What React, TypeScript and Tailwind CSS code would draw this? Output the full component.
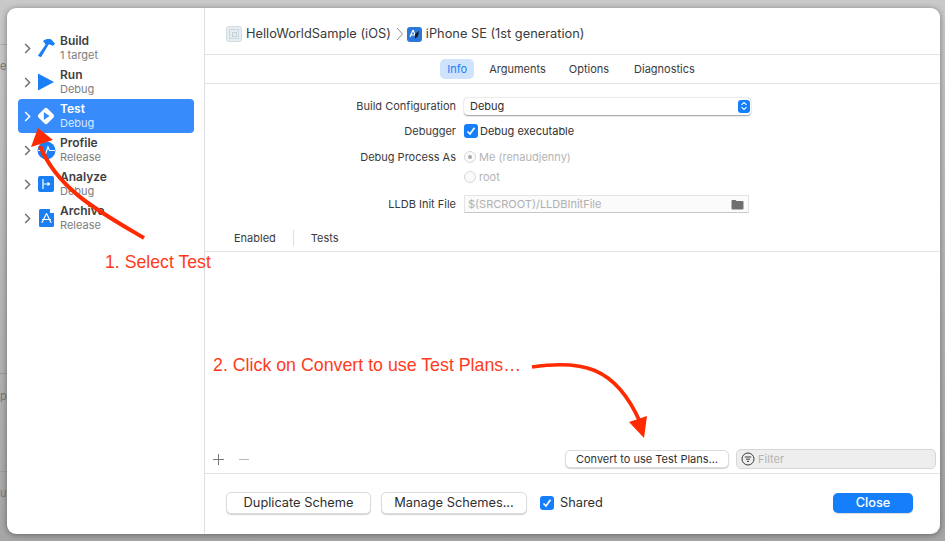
import React from "react";

const FONT = { fontFamily: '"Inter", "Liberation Sans", sans-serif' };

function Chevron({ white }: { white?: boolean }) {
  return (
    <svg width="7" height="11" viewBox="0 0 7 11" className="shrink-0">
      <path d="M1.2 1 L5.6 5.5 L1.2 10" fill="none" stroke={white ? "#ffffff" : "#6f6f6f"} strokeWidth="1.5" />
    </svg>
  );
}

function SchemeIcon({ kind }: { kind: string }) {
  if (kind === "build")
    return (
      <svg width="18" height="20" viewBox="0 0 18 20">
        <path d="M6 3 C8 1 11 0.6 14 1.2 L18 5.5 L16 8 C14.5 6.8 13 6.2 11.6 6.6 L4.2 19 C3 19.2 1.8 18.6 1 17.6 L8.6 6.4 Z" fill="#1a7ff5" />
      </svg>
    );
  if (kind === "run")
    return (
      <svg width="18" height="20" viewBox="0 0 18 20">
        <path d="M1 1.5 L17 10 L1 18.5 Z" fill="#1a7ff5" />
      </svg>
    );
  if (kind === "test")
    return (
      <svg width="20" height="20" viewBox="0 0 20 20">
        <rect x="3.6" y="3.6" width="12.8" height="12.8" rx="2.5" transform="rotate(45 10 10)" fill="#ffffff" />
        <path d="M7.8 6 L13.6 10 L7.8 14 Z" fill="#388bfb" />
      </svg>
    );
  if (kind === "profile")
    return (
      <svg width="19" height="19" viewBox="0 0 19 19">
        <circle cx="9.5" cy="9.5" r="9" fill="#1a7ff5" />
        <path d="M1 9.5 H6 L8.2 14 L11 6 L12.5 9.5 H18" fill="none" stroke="#ffffff" strokeWidth="1.2" />
      </svg>
    );
  if (kind === "analyze")
    return (
      <svg width="16" height="16" viewBox="0 0 16 16">
        <rect width="16" height="16" rx="2" fill="#1a7ff5" />
        <path d="M5 3 V13 M5 8 H10.5 M9.5 6.5 L11.5 8 L9.5 9.5" fill="none" stroke="#ffffff" strokeWidth="1.2" />
      </svg>
    );
  return (
    <svg width="15" height="18" viewBox="0 0 15 18">
      <path d="M1.5 0 H10.5 L15 4.5 V16.5 A1.5 1.5 0 0 1 13.5 18 H1.5 A1.5 1.5 0 0 1 0 16.5 V1.5 A1.5 1.5 0 0 1 1.5 0 Z" fill="#1a7ff5" />
      <path d="M11 0 V4 H15" fill="#ffffff" />
      <path d="M7.5 4.5 L3 13.5 M7.5 4.5 L12 13.5 M3 10.5 H12 M2.5 13.5 L4 12.5 M12.5 13.5 L11 12.5" fill="none" stroke="#ffffff" strokeWidth="1.2" />
    </svg>
  );
}

function Row({ kind, title, sub, active }: { kind: string; title: string; sub: string; active?: boolean }) {
  return (
    <div className={`flex h-[34px] items-center rounded-[4px] pl-[6px] ${active ? "bg-[#388bfb]" : ""}`}>
      <Chevron white={active} />
      <div className="ml-[4px] flex w-[22px] shrink-0 justify-center">
        <SchemeIcon kind={kind} />
      </div>
      <div className="ml-[3px] flex flex-col">
        <span className={`text-[12px] font-semibold leading-[14px] ${active ? "text-white" : "text-[#404040]"}`}>{title}</span>
        <span className={`text-[11px] leading-[14px] ${active ? "text-[#dbe9fe]" : "text-[#7d7d7d]"}`}>{sub}</span>
      </div>
    </div>
  );
}

function Label({ children }: { children: React.ReactNode }) {
  return <div className="w-[259px] shrink-0 pr-[8px] text-right text-[11px] text-[#3a3a3a]">{children}</div>;
}

function Check() {
  return (
    <span className="flex h-[14px] w-[14px] shrink-0 items-center justify-center rounded-[3px] bg-[#157efb]">
      <svg width="10" height="10" viewBox="0 0 10 10">
        <path d="M1.5 5.5 L4 8 L8.5 1.8" fill="none" stroke="#ffffff" strokeWidth="1.7" />
      </svg>
    </span>
  );
}

function Radio({ on }: { on?: boolean }) {
  return (
    <span className="flex h-[12px] w-[12px] shrink-0 items-center justify-center rounded-full border border-[#d8d8d8] bg-[#fafafa]">
      {on && <span className="h-[4px] w-[4px] rounded-full bg-[#a8a8a8]" />}
    </span>
  );
}

function PushButton({ children, className }: { children: React.ReactNode; className: string }) {
  return (
    <div className={`flex items-center justify-center rounded-[5px] border border-[#dcdcdc] bg-white text-[#2f2f2f] shadow-[0_1px_1px_rgba(0,0,0,0.18)] ${className}`}>
      {children}
    </div>
  );
}

export default function App() {
  return (
    <div style={FONT} className="relative h-[541px] w-[945px] overflow-hidden bg-gradient-to-b from-[#c9c9c9] to-[#a6a6a6] pb-[7px] pl-[7px] pr-[5px] pt-[8px]">
      {/* sheet behind the window */}
      <span className="absolute left-0 top-[58px] text-[11px] text-[#777777]">e</span>
      <span className="absolute left-0 top-[388px] text-[11px] text-[#777777]">p</span>
      <span className="absolute left-0 top-[485px] text-[11px] text-[#777777]">u</span>
      <div className="absolute left-0 top-[44px] h-px w-[7px] bg-[#adadad]" />
      <div className="absolute left-0 top-[373px] h-px w-[7px] bg-[#9c9c9c]" />
      <div className="absolute left-0 top-[471px] h-px w-[7px] bg-[#9c9c9c]" />

      {/* window */}
      <div className="relative flex h-full overflow-hidden rounded-[9px] bg-white shadow-[0_1px_6px_rgba(0,0,0,0.4)]">
        {/* sidebar */}
        <aside className="flex w-[198px] shrink-0 flex-col border-r border-[#e0e0e0] pl-[11px] pr-[10px] pt-[23px]">
          <Row kind="build" title="Build" sub="1 target" />
          <Row kind="run" title="Run" sub="Debug" />
          <Row kind="test" title="Test" sub="Debug" active />
          <Row kind="profile" title="Profile" sub="Release" />
          <Row kind="analyze" title="Analyze" sub="Debug" />
          <Row kind="archive" title="Archive" sub="Release" />
        </aside>

        {/* main */}
        <main className="flex min-w-0 flex-1 flex-col">
          <div className="flex h-[47px] shrink-0 items-center border-b border-[#e2e2e2] pl-[21px] pt-[6px] text-[12.8px] text-[#3a3a3a]">
            <span className="flex h-[16px] w-[16px] items-center justify-center rounded-[3px] border border-[#d4dcdf] bg-[#e6eef1]">
              <span className="flex h-[10px] w-[10px] items-center justify-center border border-[#cdd9de]">
                <span className="h-[5px] w-[5px] border border-[#c3d0d6]" />
              </span>
            </span>
            <span className="ml-[4px]">HelloWorldSample (iOS)</span>
            <svg width="8" height="14" viewBox="0 0 8 14" className="ml-[5px]">
              <path d="M1 1 L6.5 7 L1 13" fill="none" stroke="#8a8a8a" strokeWidth="1" />
            </svg>
            <span className="ml-[3px] flex h-[15px] w-[15px] items-center justify-center rounded-[3px] bg-[#2a78d8]">
              <svg width="12" height="12" viewBox="0 0 12 12">
                <path d="M5 2 L2 9 M5 2 L8 9 M2 7 H8" fill="none" stroke="#ffffff" strokeWidth="1.1" />
                <path d="M7 6 L11 3 L10 8 L7 11 Z" fill="#1b1b1b" />
              </svg>
            </span>
            <span className="ml-[4px]">iPhone SE (1st generation)</span>
          </div>

          <div className="flex h-[29px] shrink-0 items-center justify-center border-b border-[#e2e2e2] pr-[10px] text-[11px] text-[#3a3a3a]">
            <span className="flex h-[20px] w-[34px] items-center justify-center rounded-[5px] bg-[#cfe3fd] text-[#1a7ff5]">Info</span>
            <span className="ml-[15px]">Arguments</span>
            <span className="ml-[23px]">Options</span>
            <span className="ml-[25px]">Diagnostics</span>
          </div>

          <div className="flex h-[168px] shrink-0 flex-col border-b border-[#e2e2e2] pt-[11px]">
            <div className="flex h-[22px] items-center">
              <Label>Build Configuration</Label>
              <div className="flex h-[17px] w-[287px] items-center justify-between rounded-[4px] bg-white pl-[6px] pr-[1px] text-[11px] text-[#2f2f2f] shadow-[0_0.5px_1.5px_rgba(0,0,0,0.4)]">
                <span>Debug</span>
                <span className="flex h-[13px] w-[12px] items-center justify-center rounded-[3px] bg-[#157efb]">
                  <svg width="8" height="10" viewBox="0 0 8 10">
                    <path d="M1.5 3.8 L4 1.5 L6.5 3.8 M1.5 6.2 L4 8.5 L6.5 6.2" fill="none" stroke="#ffffff" strokeWidth="1.1" />
                  </svg>
                </span>
              </div>
            </div>
            <div className="mt-[3px] flex h-[22px] items-center">
              <Label>Debugger</Label>
              <Check />
              <span className="ml-[2px] text-[11px] text-[#2f2f2f]">Debug executable</span>
            </div>
            <div className="mt-[5px] flex h-[20px] items-center">
              <Label>Debug Process As</Label>
              <Radio on />
              <span className="ml-[3px] text-[11px] text-[#b4b4b4]">Me (renaudjenny)</span>
            </div>
            <div className="flex h-[20px] items-center">
              <div className="w-[259px] shrink-0" />
              <Radio />
              <span className="ml-[3px] text-[11px] text-[#b4b4b4]">root</span>
            </div>
            <div className="mt-[7px] flex h-[20px] items-center">
              <Label>LLDB Init File</Label>
              <div className="flex h-[18px] w-[285px] items-center justify-between border border-[#e4e4e4] border-b-[#c8c8c8] bg-[#fbfbfb] pl-[3px] pr-[4px] text-[11px] text-[#b0b0b0]">
                <span>$(SRCROOT)/LLDBInitFile</span>
                <svg width="13" height="11" viewBox="0 0 13 11">
                  <path d="M0.5 2 A1 1 0 0 1 1.5 1 H4.5 L5.5 2 H11.5 A1 1 0 0 1 12.5 3 V9.5 A1 1 0 0 1 11.5 10.5 H1.5 A1 1 0 0 1 0.5 9.5 Z" fill="#6f6f6f" />
                </svg>
              </div>
            </div>
            <div className="mt-auto flex h-[26px] items-center pl-[29px] text-[11px] text-[#3a3a3a]">
              <span>Enabled</span>
              <span className="ml-[17px] h-[16px] w-px bg-[#dedede]" />
              <span className="ml-[17px]">Tests</span>
            </div>
          </div>

          <div className="min-h-0 flex-1" />

          <div className="flex h-[26px] shrink-0 items-center border-b border-[#e2e2e2] pb-[3px] pl-[8px] pr-[4px]">
            <svg width="11" height="11" viewBox="0 0 11 11">
              <path d="M5.5 0 V11 M0 5.5 H11" stroke="#777777" strokeWidth="1" />
            </svg>
            <svg width="10" height="1" viewBox="0 0 10 1" className="ml-[15px]">
              <path d="M0 0.5 H10" stroke="#b8b8b8" strokeWidth="1" />
            </svg>
            <div className="ml-auto mr-[7px]">
              <PushButton className="h-[18px] w-[164px] text-[11px]">Convert to use Test Plans…</PushButton>
            </div>
            <div className="flex h-[20px] w-[200px] items-center rounded-[5px] border border-[#d6d6d6] bg-[#eeeeee] pl-[4px] text-[11px] text-[#b4b4b4]">
              <svg width="14" height="14" viewBox="0 0 14 14" className="shrink-0">
                <circle cx="7" cy="7" r="6" fill="none" stroke="#3a3a3a" strokeWidth="1" />
                <path d="M3.8 5 H10.2 M5 7.2 H9 M6 9.4 H8" stroke="#3a3a3a" strokeWidth="1" />
              </svg>
              <span className="ml-[3px]">Filter</span>
            </div>
          </div>

          <div className="flex h-[60px] shrink-0 items-center pb-[2px] pl-[21px] pr-[27px] text-[12.8px]">
            <PushButton className="h-[22px] w-[145px]">Duplicate Scheme</PushButton>
            <PushButton className="ml-[10px] h-[22px] w-[146px]">Manage Schemes...</PushButton>
            <span className="ml-[13px]">
              <Check />
            </span>
            <span className="ml-[6px] text-[#2f2f2f]">Shared</span>
            <div className="ml-auto flex h-[20px] w-[80px] items-center justify-center rounded-[5px] bg-[#157efb] font-medium text-white shadow-[0_1px_1px_rgba(0,0,0,0.15)]">
              Close
            </div>
          </div>
        </main>
      </div>

      {/* annotations */}
      <svg width="945" height="541" viewBox="0 0 945 541" className="pointer-events-none absolute left-0 top-0">
        <path d="M144 238 C100 212 58 190 40 146" fill="none" stroke="#ff2a00" strokeWidth="4" />
        <path d="M38 128 L31 147 L53 140 Z" fill="#ff2a00" />
        <path d="M532 367 C580 360 615 365 640 422" fill="none" stroke="#ff2a00" strokeWidth="3.6" />
        <path d="M629 422 L647 416 L644 438 Z" fill="#ff2a00" />
      </svg>
      <span className="absolute left-[105px] top-[252px] text-[17.7px] leading-[20px] text-[#ff3b20]" style={{ fontFamily: '"Liberation Sans", sans-serif' }}>1. Select Test</span>
      <span className="absolute left-[213px] top-[355px] text-[17.8px] leading-[20px] text-[#ff3b20]" style={{ fontFamily: '"Liberation Sans", sans-serif' }}>2. Click on Convert to use Test Plans…</span>
    </div>
  );
}
